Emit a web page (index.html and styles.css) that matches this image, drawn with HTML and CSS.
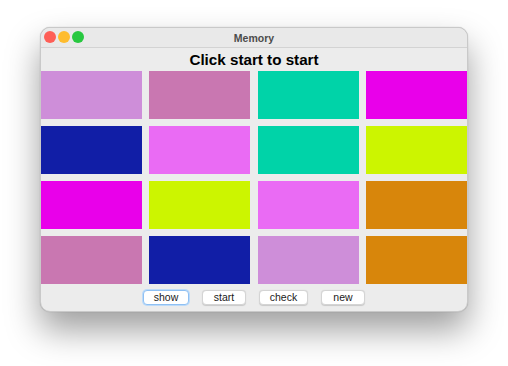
FILE: index.html
```html
<!DOCTYPE html>
<html lang="en">
<head>
    <meta charset="UTF-8">
    <meta name="viewport" content="width=device-width, initial-scale=1.0">
    <title>Memory</title>
    <link rel="stylesheet" href="styles.css">
</head>
<body>
    <div class="window">
        <div class="titlebar">
            <div class="lights">
                <span class="light red"></span>
                <span class="light yellow"></span>
                <span class="light green"></span>
            </div>
            <div class="title">Memory</div>
        </div>

        <h1 class="status">Click start to start</h1>

        <div class="board">
            <div class="tile orchid"></div>
            <div class="tile mauve"></div>
            <div class="tile teal"></div>
            <div class="tile magenta"></div>

            <div class="tile navy"></div>
            <div class="tile pink"></div>
            <div class="tile teal"></div>
            <div class="tile lime"></div>

            <div class="tile magenta"></div>
            <div class="tile lime"></div>
            <div class="tile pink"></div>
            <div class="tile orange"></div>

            <div class="tile mauve"></div>
            <div class="tile navy"></div>
            <div class="tile orchid"></div>
            <div class="tile orange"></div>
        </div>

        <div class="controls">
            <button class="btn focused">show</button>
            <button class="btn">start</button>
            <button class="btn">check</button>
            <button class="btn">new</button>
        </div>
    </div>
</body>
</html>
```

FILE: styles.css
```css
html, body {
    height: 100%;
}
body {
    margin: 0;
    padding: 27px 0 0 40px;
    box-sizing: border-box;
    background: #ffffff;
    font-family: "Liberation Sans", Arial, sans-serif;
}
.window {
    width: 428px;
    height: 285px;
    box-sizing: border-box;
    background: #ececec;
    border: 1px solid #c9c9c9;
    border-radius: 10px;
    overflow: hidden;
    display: flex;
    flex-direction: column;
    box-shadow: 0 18px 34px rgba(0, 0, 0, 0.38), 0 0 1px rgba(0, 0, 0, 0.3);
}
.titlebar {
    position: relative;
    height: 19px;
    background: #e9e9e9;
    border-bottom: 1px solid #d3d3d3;
    display: flex;
    align-items: center;
    justify-content: center;
}
.lights {
    position: absolute;
    left: 3px;
    top: 3px;
    display: flex;
    gap: 2px;
}
.light {
    width: 12px;
    height: 12px;
    border-radius: 50%;
}
.red {
    background: #fe5f57;
}
.yellow {
    background: #febc2e;
}
.green {
    background: #28c840;
}
.title {
    font-size: 10.5px;
    font-weight: bold;
    color: #4c4c4c;
}
.status {
    margin: 0;
    height: 23px;
    line-height: 24px;
    font-size: 15.2px;
    font-weight: bold;
    text-align: center;
    color: #000;
}
.board {
    display: grid;
    grid-template-columns: repeat(4, 1fr);
    grid-template-rows: repeat(4, 48px);
    column-gap: 7.3px;
    row-gap: 7px;
}
.tile {
    height: 48px;
}
.orchid {
    background: #ce8ed9;
}
.mauve {
    background: #c977b1;
}
.teal {
    background: #00d3a8;
}
.magenta {
    background: #e900ea;
}
.navy {
    background: #111ea6;
}
.pink {
    background: #ea6bf4;
}
.lime {
    background: #ccf500;
}
.orange {
    background: #d8860b;
}
.controls {
    flex: 1;
    display: flex;
    justify-content: center;
    align-items: center;
    gap: 13px;
    padding-bottom: 1px;
}
.btn {
    height: 15px;
    padding: 0;
    min-width: 44px;
    font-family: "Liberation Sans", Arial, sans-serif;
    font-size: 10.5px;
    color: #1a1a1a;
    background: #ffffff;
    border: 1px solid #d4d4d4;
    border-radius: 4px;
    box-shadow: 0 0.5px 1px rgba(0, 0, 0, 0.15);
}
.btn:nth-child(3) {
    min-width: 49px;
}
.focused {
    border: 1px solid #8fc0f3;
    box-shadow: 0 0 0 1px #bcdaf8;
    min-width: 46px;
}
```
